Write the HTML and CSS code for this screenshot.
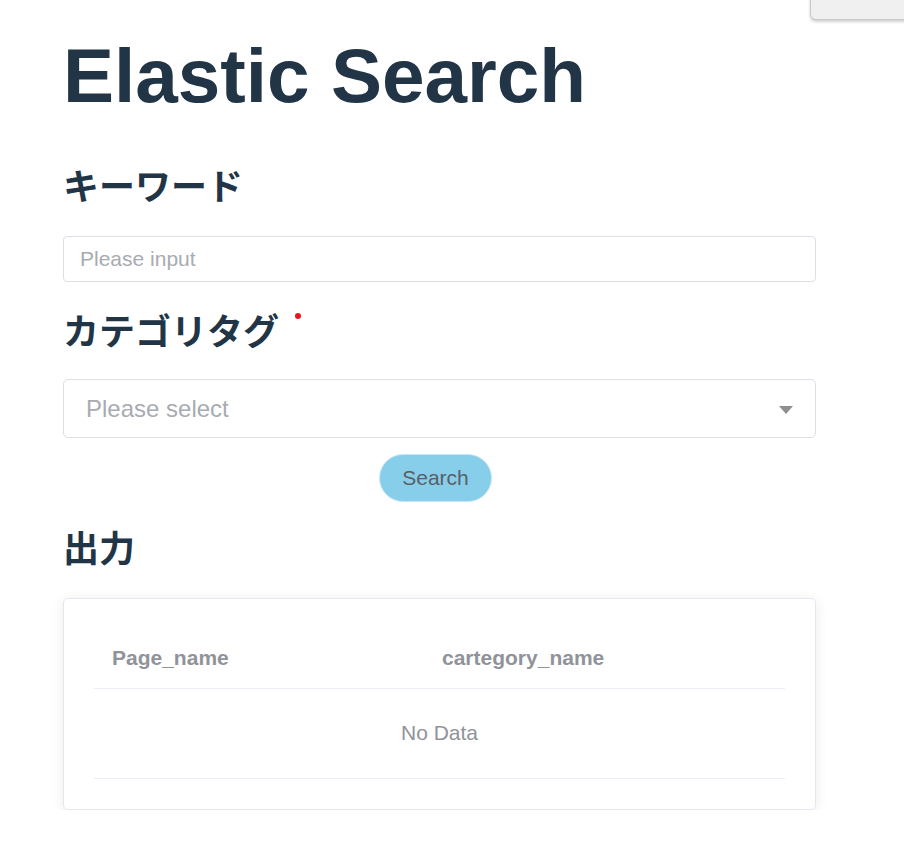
FILE: index.html
```html
<!DOCTYPE html>
<html lang="ja">
<head>
<meta charset="utf-8">
<title>Elastic Search</title>
<link rel="stylesheet" href="styles.css">
</head>
<body>
<div class="ext-tab"></div>
<main class="page">
  <h1 class="title">Elastic Search</h1>
  <h2 class="label label-keyword">キーワード</h2>
  <input class="text-input" type="text" placeholder="Please input">
  <h2 class="label label-category">カテゴリタグ<span class="required"></span></h2>
  <div class="select">
    <span class="select-placeholder">Please select</span>
    <svg class="caret" width="14" height="8" viewBox="0 0 14 8"><path d="M0 0H14L7 8Z" fill="#8e8e8e"/></svg>
  </div>
  <div class="actions"><button class="search-btn" type="button">Search</button></div>
  <h2 class="label label-output">出力</h2>
  <div class="card">
    <table class="result-table">
      <thead>
        <tr><th class="col-page">Page_name</th><th>cartegory_name</th></tr>
      </thead>
      <tbody>
        <tr><td class="empty" colspan="2">No Data</td></tr>
      </tbody>
    </table>
  </div>
</main>
</body>
</html>
```

FILE: styles.css
```css
* { box-sizing: border-box; }
html, body { margin: 0; padding: 0; background: #fff; }
body {
  font-family: "Liberation Sans", "Noto Sans CJK JP", Arial, sans-serif;
  color: #213547;
}
.ext-tab {
  position: absolute;
  top: -10px;
  left: 810px;
  width: 110px;
  height: 30px;
  background: #f0f0f0;
  border: 1px solid #c8c8c8;
  border-radius: 6px;
  box-shadow: 0 2px 3px rgba(0,0,0,0.18);
}
.page {
  width: 753px;
  margin-left: 63px;
  display: flex;
  flex-direction: column;
}
.title {
  margin: 33px 0 0;
  font-size: 76.5px;
  line-height: 85px;
  font-weight: 700;
  color: #213547;
}
.label {
  margin: 0;
  font-family: "Noto Sans CJK JP", "Liberation Sans", sans-serif;
  font-size: 36px;
  line-height: 43px;
  font-weight: 700;
  color: #213547;
  display: flex;
  align-items: flex-start;
}
.label-keyword { margin-top: 45px; }
.label-category { margin-top: 26px; }
.label-output { margin-top: 23px; }
.required {
  width: 6px;
  height: 6px;
  border-radius: 50%;
  background: #e8161b;
  margin: 5px 0 0 16px;
}
.text-input {
  margin-top: 30px;
  width: 100%;
  height: 46px;
  border: 1px solid #dcdfe6;
  border-radius: 4px;
  padding: 0 16px;
  font-family: "Liberation Sans", Arial, sans-serif;
  font-size: 21px;
  color: #606266;
  outline: none;
}
.text-input::placeholder { color: #a8abb2; }
.select {
  margin-top: 28px;
  height: 59px;
  border: 1px solid #dcdfe6;
  border-radius: 5px;
  display: flex;
  align-items: center;
  justify-content: space-between;
  padding: 0 22px 0 22px;
}
.select-placeholder {
  font-size: 24px;
  color: #a8abb2;
}
.caret { display: block; margin-top: 2px; }
.actions {
  margin-top: 16px;
  display: flex;
  justify-content: center;
  padding-right: 8px;
}
.search-btn {
  width: 113px;
  height: 48px;
  border-radius: 24px;
  border: 1px solid #c9e7f3;
  background: #87ceeb;
  color: #5a5e66;
  font-family: "Liberation Sans", Arial, sans-serif;
  font-size: 21px;
  padding: 0;
}
.card {
  margin-top: 30px;
  border: 1px solid #e4e7ed;
  border-radius: 5px;
  padding: 30px;
  box-shadow: 0 2px 14px rgba(0,0,0,0.08);
  background: #fff;
}
.result-table {
  width: 100%;
  border-collapse: collapse;
  table-layout: fixed;
}
.result-table th {
  height: 59px;
  padding: 0 18px;
  text-align: left;
  font-size: 21px;
  font-weight: 700;
  color: #909399;
  border-bottom: 1px solid #ebeef5;
}
.result-table th.col-page { width: 330px; }
.result-table td.empty {
  height: 90px;
  text-align: center;
  font-size: 21px;
  color: #909399;
  border-bottom: 1px solid #ebeef5;
}
```
